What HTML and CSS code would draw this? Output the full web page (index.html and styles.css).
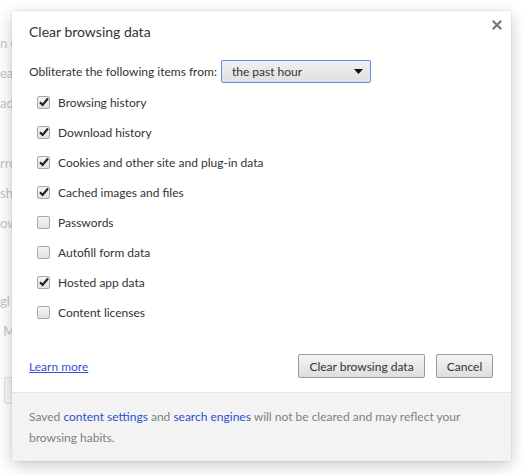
FILE: index.html
```html
<!DOCTYPE html>
<html>
<head>
<meta charset="utf-8">
<link rel="stylesheet" href="styles.css">
</head>
<body>
<div class="page">
  <div class="bg-line l1">n e</div>
  <div class="bg-line l2">ear</div>
  <div class="bg-line l3">ad</div>
  <div class="bg-line l4">rro</div>
  <div class="bg-line l5">sh</div>
  <div class="bg-line l6">ow</div>
  <div class="bg-line l7">gl</div>
  <div class="bg-line l8">&nbsp;M</div>
  <div class="bg-box"></div>
</div>

<div class="dialog">
  <div class="header">
    <h1 class="title">Clear browsing data</h1>
    <button class="close" aria-label="Close">
      <svg width="10" height="10" viewBox="0 0 10 10"><path d="M1.5 1.5 L8.5 8.5 M8.5 1.5 L1.5 8.5" stroke="#777" stroke-width="2.2" stroke-linecap="square"/></svg>
    </button>
  </div>
  <div class="content">
    <div class="period">
      <span>Obliterate the following items from:</span>
      <div class="select">
        <span>the past hour</span>
        <svg class="arrow" width="9" height="5" viewBox="0 0 9 5"><path d="M0 0 H9 L4.5 5 Z" fill="#111"/></svg>
      </div>
    </div>
    <div class="checks">
      <label class="check"><span class="box on"></span>Browsing history</label>
      <label class="check"><span class="box on"></span>Download history</label>
      <label class="check"><span class="box on"></span>Cookies and other site and plug-in data</label>
      <label class="check"><span class="box on"></span>Cached images and files</label>
      <label class="check"><span class="box"></span>Passwords</label>
      <label class="check"><span class="box"></span>Autofill form data</label>
      <label class="check"><span class="box on"></span>Hosted app data</label>
      <label class="check"><span class="box"></span>Content licenses</label>
    </div>
    <div class="actions">
      <a class="learn" href="#">Learn more</a>
      <div class="buttons">
        <button class="btn btn-clear">Clear browsing data</button>
        <button class="btn btn-cancel">Cancel</button>
      </div>
    </div>
  </div>
  <div class="footer">
    <p class="note">Saved <a href="#">content settings</a> and <a href="#">search engines</a> will not be cleared and may reflect your browsing habits.</p>
  </div>
</div>
</body>
</html>
```
FILE: styles.css
```css
html, body {
  margin: 0;
  padding: 0;
  background: #fff;
  width: 524px;
  height: 475px;
  overflow: hidden;
  font-family: "Lato", "Open Sans", sans-serif;
}

.page {
  display: flex;
  flex-direction: column;
  font-size: 13px;
  color: #c4c4c4;
  padding-top: 34px;
}
.bg-line {
  height: 30px;
  line-height: 18px;
  white-space: nowrap;
}
.l4 { margin-top: 30px; }
.l7 { margin-top: 48px; }
.l8 { height: 20px; }
.bg-box {
  margin-top: 35px;
  margin-left: 4px;
  width: 20px;
  height: 25px;
  border: 1px solid #e2e2e2;
  border-radius: 2px;
  background: #f7f7f7;
}

.dialog {
  position: absolute;
  left: 12px;
  top: 11px;
  width: 499px;
  height: 450px;
  background: #fff;
  border-radius: 3px;
  box-shadow: 0 4px 16px rgba(0,0,0,0.22), 0 0 0 1px rgba(0,0,0,0.04);
  display: flex;
  flex-direction: column;
  color: #333;
  font-size: 12px;
  overflow: hidden;
}

.header {
  display: flex;
  justify-content: space-between;
  align-items: flex-start;
  padding: 11px 9px 0 17px;
}
.title {
  margin: 0;
  font-size: 14px;
  font-weight: normal;
  line-height: 20px;
  color: #333;
}
.close {
  border: 0;
  background: none;
  padding: 0;
  margin-top: -2px;
  width: 10px;
  height: 10px;
  display: flex;
}

.content {
  flex: 1;
  display: flex;
  flex-direction: column;
  padding: 0 18px 0 17px;
}

.period {
  margin-top: 18px;
  display: flex;
  align-items: center;
  gap: 4px;
  height: 23px;
}
.select {
  width: 150px;
  height: 23px;
  box-sizing: border-box;
  border: 1px solid #5a8de8;
  border-radius: 2px;
  background: linear-gradient(#f0f0f0, #e0e0e0);
  display: flex;
  align-items: center;
  justify-content: space-between;
  padding: 0 7px 0 10px;
  color: #333;
}

.checks {
  margin-top: 4px;
  display: flex;
  flex-direction: column;
}
.check {
  height: 30px;
  display: flex;
  align-items: center;
  gap: 8px;
  padding-left: 8px;
}
.box {
  width: 11px;
  height: 11px;
  border: 1px solid #a8a8a8;
  border-radius: 2px;
  background: linear-gradient(#f4f4f4, #e2e2e2);
  position: relative;
  flex: none;
}
.box.on::after {
  content: "";
  position: absolute;
  left: 1px;
  top: 0px;
  width: 10px;
  height: 10px;
  background: url("data:image/svg+xml;utf8,<svg xmlns='http://www.w3.org/2000/svg' width='10' height='10' viewBox='0 0 10 10'><path d='M1 5.2 L3.6 8 L9 1.5' fill='none' stroke='%23222' stroke-width='2.1'/></svg>") no-repeat;
}

.actions {
  margin-top: 27px;
  display: flex;
  justify-content: space-between;
  align-items: center;
  height: 24px;
}
.learn {
  color: #3b4fd6;
  text-decoration: underline;
}
.buttons {
  display: flex;
  gap: 11px;
}
.btn {
  font-family: inherit;
  font-size: 12px;
  color: #333;
  height: 24px;
  padding: 0;
  border: 1px solid #9a9a9a;
  border-radius: 2px;
  background: linear-gradient(#f4f4f4, #dedede);
}
.btn-clear { width: 127px; }
.btn-cancel { width: 57px; }

.footer {
  height: 69px;
  box-sizing: border-box;
  border-top: 1px solid #e4e4e4;
  background: #f3f3f3;
  padding: 13px 30px 0 17px;
  color: #808080;
}
.note {
  margin: 0;
  line-height: 21px;
}
.footer a {
  color: #2a4fd3;
  text-decoration: none;
}
```
